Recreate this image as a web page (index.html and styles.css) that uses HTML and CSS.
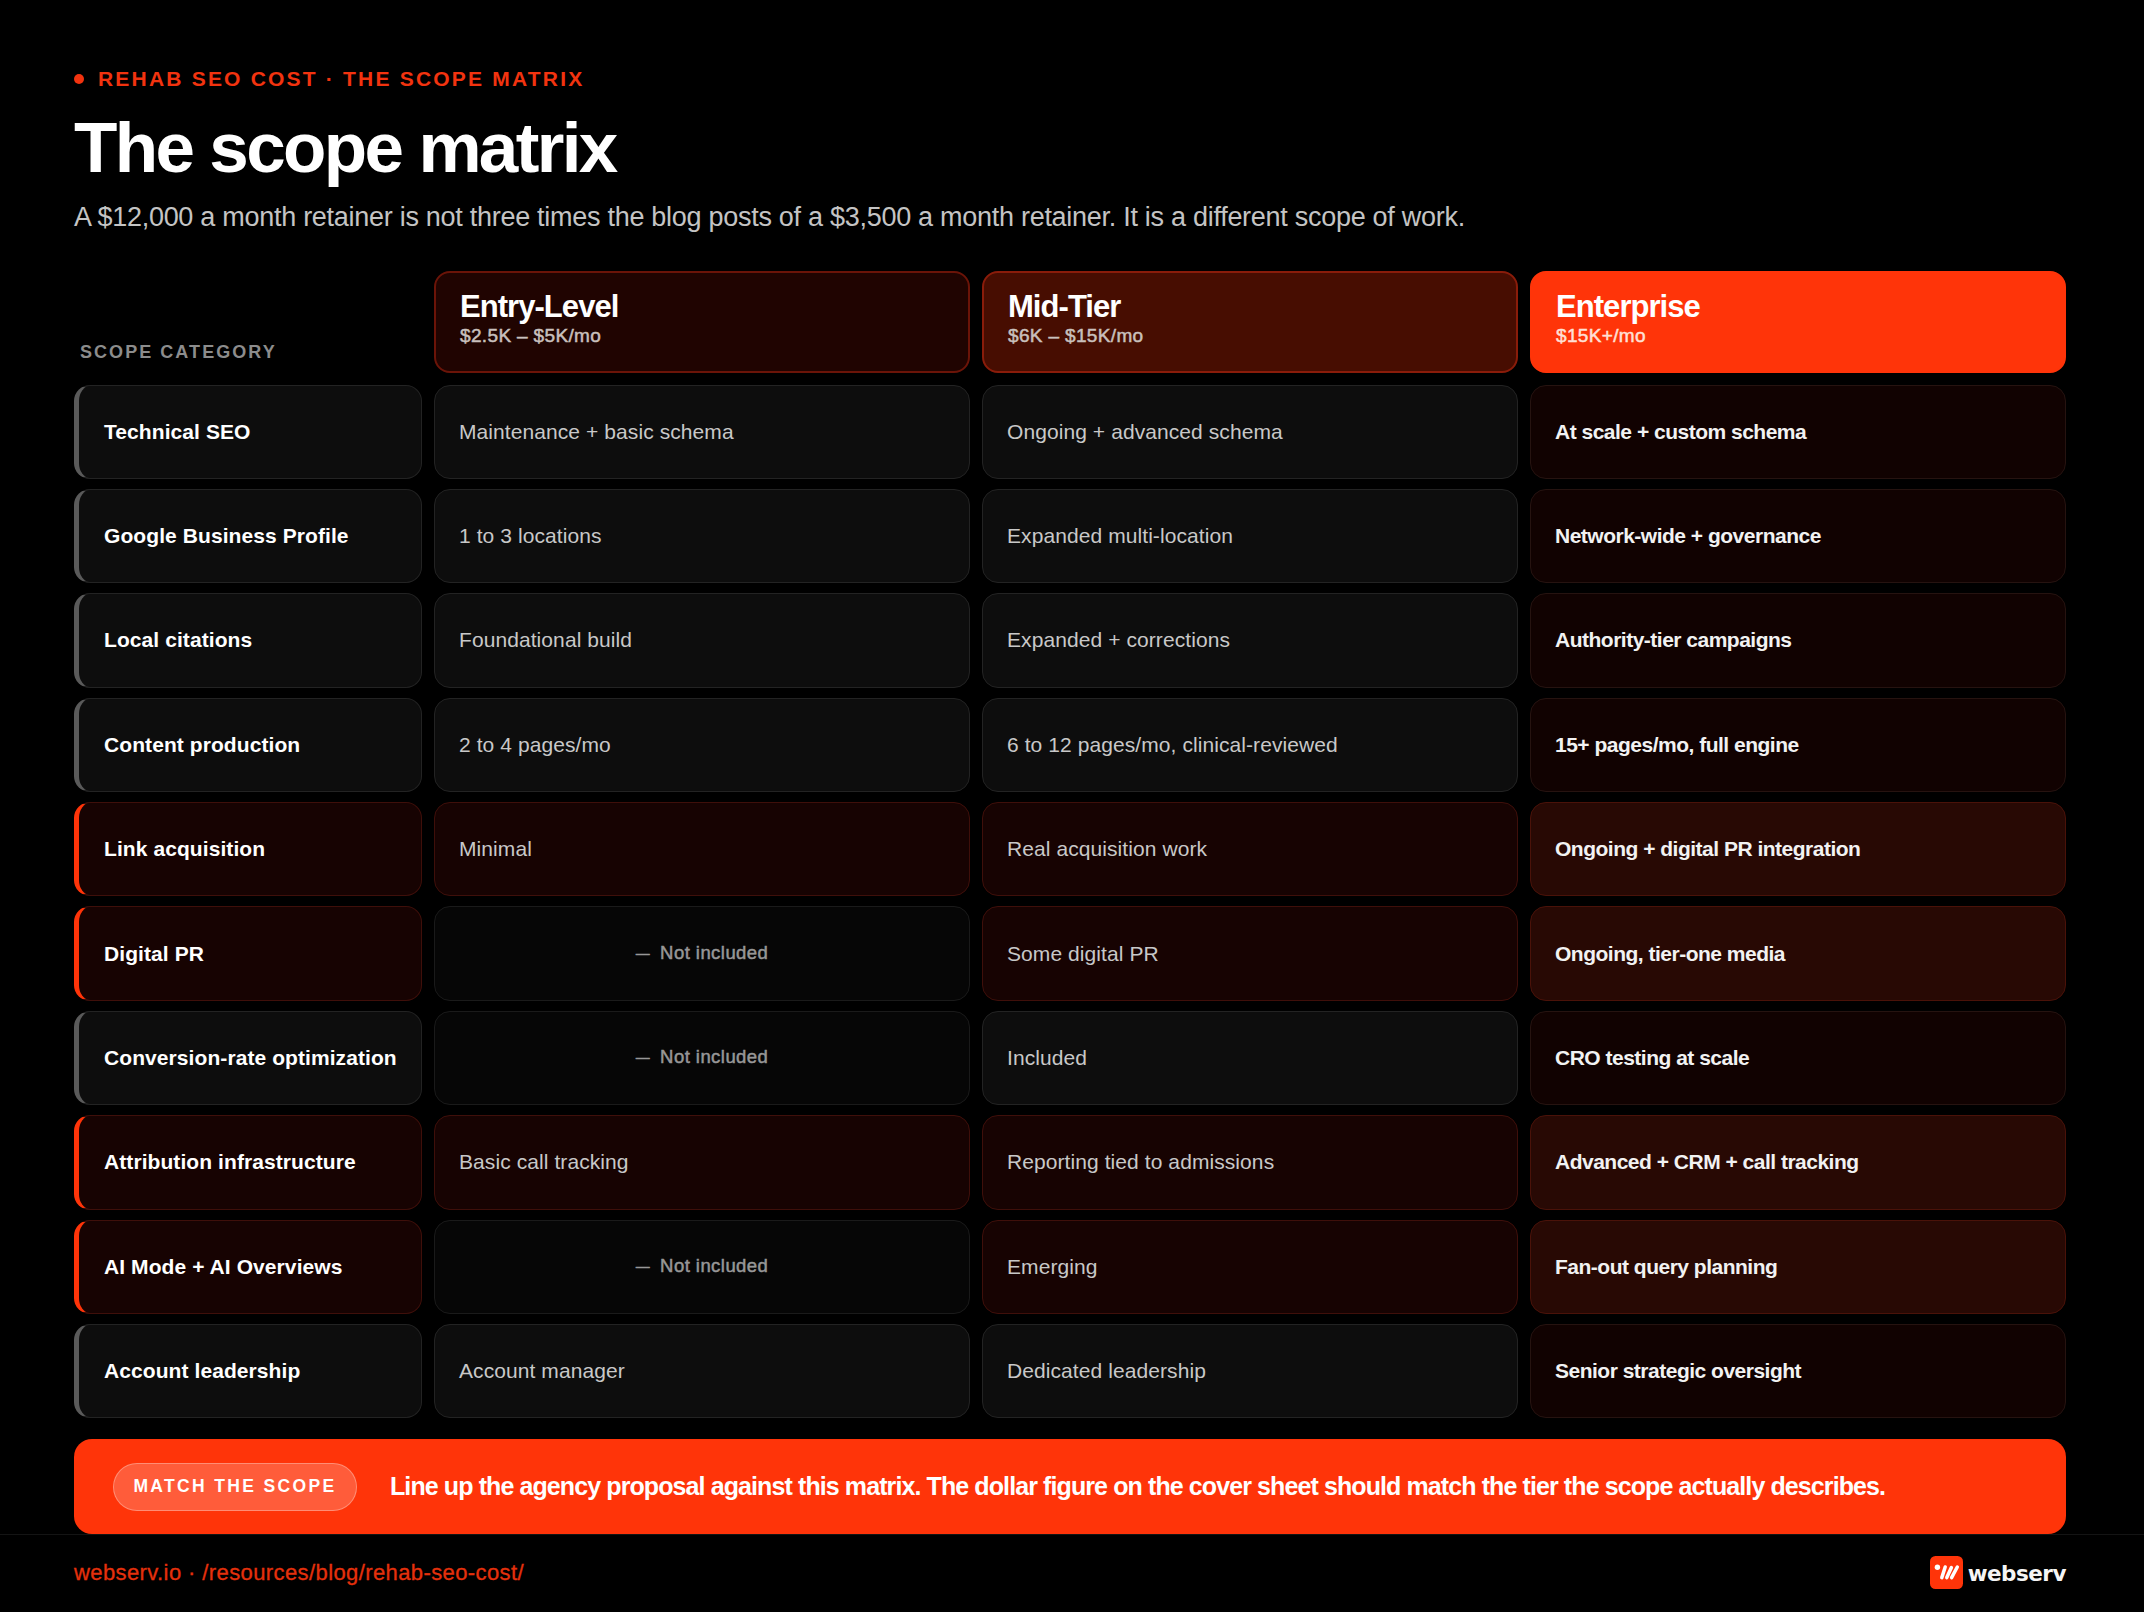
FILE: index.html
```html
<!DOCTYPE html>
<html>
<head>
<meta charset="utf-8">
<title>The scope matrix</title>
<link rel="stylesheet" href="styles.css">
</head>
<body>
<div class="page">
  <div class="eyebrow"><span class="dot"></span>REHAB SEO COST · THE SCOPE MATRIX</div>
  <h1>The scope matrix</h1>
  <p class="lede">A $12,000 a month retainer is not three times the blog posts of a $3,500 a month retainer. It is a different scope of work.</p>

  <div class="matrix">
    <div class="corner">SCOPE CATEGORY</div>
    <div class="tier entry"><b>Entry-Level</b><span>$2.5K – $5K/mo</span></div>
    <div class="tier mid"><b>Mid-Tier</b><span>$6K – $15K/mo</span></div>
    <div class="tier top"><b>Enterprise</b><span>$15K+/mo</span></div>

    <div class="cell cat">Technical SEO</div>
    <div class="cell">Maintenance + basic schema</div>
    <div class="cell">Ongoing + advanced schema</div>
    <div class="cell ent">At scale + custom schema</div>

    <div class="cell cat">Google Business Profile</div>
    <div class="cell">1 to 3 locations</div>
    <div class="cell">Expanded multi-location</div>
    <div class="cell ent">Network-wide + governance</div>

    <div class="cell cat">Local citations</div>
    <div class="cell">Foundational build</div>
    <div class="cell">Expanded + corrections</div>
    <div class="cell ent">Authority-tier campaigns</div>

    <div class="cell cat">Content production</div>
    <div class="cell">2 to 4 pages/mo</div>
    <div class="cell">6 to 12 pages/mo, clinical-reviewed</div>
    <div class="cell ent">15+ pages/mo, full engine</div>

    <div class="cell cat hot">Link acquisition</div>
    <div class="cell hot">Minimal</div>
    <div class="cell hot">Real acquisition work</div>
    <div class="cell ent hot">Ongoing + digital PR integration</div>

    <div class="cell cat hot">Digital PR</div>
    <div class="cell none"><span class="dash">—</span>Not included</div>
    <div class="cell hot">Some digital PR</div>
    <div class="cell ent hot">Ongoing, tier-one media</div>

    <div class="cell cat">Conversion-rate optimization</div>
    <div class="cell none"><span class="dash">—</span>Not included</div>
    <div class="cell">Included</div>
    <div class="cell ent">CRO testing at scale</div>

    <div class="cell cat hot">Attribution infrastructure</div>
    <div class="cell hot">Basic call tracking</div>
    <div class="cell hot">Reporting tied to admissions</div>
    <div class="cell ent hot">Advanced + CRM + call tracking</div>

    <div class="cell cat hot">AI Mode + AI Overviews</div>
    <div class="cell none"><span class="dash">—</span>Not included</div>
    <div class="cell hot">Emerging</div>
    <div class="cell ent hot">Fan-out query planning</div>

    <div class="cell cat">Account leadership</div>
    <div class="cell">Account manager</div>
    <div class="cell">Dedicated leadership</div>
    <div class="cell ent">Senior strategic oversight</div>
  </div>

  <div class="banner">
    <span class="pill">MATCH THE SCOPE</span>
    <span class="banner-text">Line up the agency proposal against this matrix. The dollar figure on the cover sheet should match the tier the scope actually describes.</span>
  </div>
</div>

<footer class="foot">
  <span class="url">webserv.io · /resources/blog/rehab-seo-cost/</span>
  <span class="logo">
    <svg class="mark" viewBox="0 0 33 33" width="33" height="33">
      <rect width="33" height="33" rx="5.5" fill="#ff3409"/>
      <circle cx="7.4" cy="11.2" r="2.7" fill="#fff"/>
      <path d="M15.2 11 L11.8 21.6 M21.4 11.5 L16.8 21.6 M27.3 11 L21.6 21.6" stroke="#fff" stroke-width="3.5" stroke-linecap="round" fill="none"/>
    </svg>
    <span class="word">webserv</span>
  </span>
</footer>
</body>
</html>
```

FILE: styles.css
```css
* { box-sizing: border-box; }

html, body { margin: 0; padding: 0; }

body {
  width: 2144px;
  height: 1612px;
  background: #000;
  color: #fff;
  font-family: "Liberation Sans", Arial, sans-serif;
  overflow: hidden;
}

.page { padding: 68px 78px 0 74px; }

.eyebrow {
  display: flex;
  align-items: center;
  height: 21px;
  font-size: 21px;
  font-weight: 700;
  letter-spacing: 2.2px;
  color: #f2330f;
}

.dot {
  width: 10px;
  height: 10px;
  border-radius: 50%;
  background: #f2330f;
  margin-right: 14px;
}

h1 {
  margin: 21px 0 0;
  font-size: 71px;
  line-height: 76px;
  font-weight: 700;
  letter-spacing: -2.65px;
}

.lede {
  margin: 14px 0 0;
  font-size: 27px;
  line-height: 34px;
  letter-spacing: -0.28px;
  color: #c4c4c4;
}

.matrix {
  display: grid;
  grid-template-columns: 348px repeat(3, 1fr);
  grid-template-rows: 104px repeat(10, 94.4px);
  gap: 10px 12px;
  margin-top: 36.5px;
}

.corner {
  align-self: end;
  padding: 0 0 12px 6px;
  font-size: 18px;
  font-weight: 700;
  letter-spacing: 2.05px;
  color: #8c8c8c;
}

.tier {
  display: flex;
  flex-direction: column;
  height: 102px;
  padding: 16px 24px 0;
  border-radius: 16px;
  border: 2px solid #6b1408;
}
.tier b { font-size: 31px; line-height: 35px; letter-spacing: -0.95px; }
.tier span {
  font-size: 19px;
  line-height: 24px;
  letter-spacing: .35px;
  -webkit-text-stroke: .5px;
  color: #c9c0bd;
}

.entry { background: #200401; }
.mid { background: #470d01; border-color: #8a1c0a; }
.top { background: #ff3409; border-color: #ff3409; }
.top span { color: #ffe0d6; }

.cell {
  display: flex;
  align-items: center;
  padding: 0 24px;
  border: 1.5px solid #232323;
  border-radius: 16px;
  background: #0d0d0d;
  font-size: 21px;
  letter-spacing: .08px;
  color: #c8c8c8;
}

.cat {
  padding: 0 0 0 25px;
  border-left: 5px solid #5a5a5a;
  font-weight: 700;
  letter-spacing: .08px;
  white-space: nowrap;
  color: #fff;
}

.ent {
  background: #110201;
  border-color: #261310;
  font-weight: 700;
  letter-spacing: -0.5px;
  color: #f2f2f2;
}

.hot { background: #170302; border-color: #3f0f0a; }
.ent.hot { background: #280904; border-color: #4a1209; }
.cat.hot { border-left-color: #ff3409; }

.none {
  justify-content: center;
  padding-bottom: 2px;
  background: #060606;
  border-color: #1a1a1a;
  font-size: 18.5px;
  letter-spacing: .45px;
  -webkit-text-stroke: .5px;
  color: #979797;
}

.dash {
  margin-right: 10px;
  font-size: 14px;
  -webkit-text-stroke: .3px;
}

.banner {
  display: flex;
  align-items: center;
  height: 95px;
  margin-top: 21px;
  padding-left: 39px;
  background: #ff3409;
  border-radius: 18px;
}

.pill {
  display: flex;
  align-items: center;
  justify-content: center;
  width: 244px;
  height: 48px;
  border-radius: 24px;
  background: rgba(255, 255, 255, .2);
  border: 1.5px solid rgba(255, 255, 255, .3);
  font-size: 17.5px;
  font-weight: 700;
  letter-spacing: 2.35px;
}

.banner-text {
  margin-left: 33px;
  font-size: 25px;
  font-weight: 700;
  letter-spacing: -0.9px;
}

.foot {
  display: flex;
  align-items: center;
  justify-content: space-between;
  height: 76px;
  padding: 0 78px 0 74px;
  border-top: 1px solid #141414;
}

.url {
  font-size: 22px;
  -webkit-text-stroke: .3px;
  letter-spacing: .4px;
  color: #e5300c;
}

.logo { display: flex; align-items: center; gap: 5px; }
.mark { display: block; }
.word {
  padding-top: 2px;
  font-family: "DejaVu Sans", sans-serif;
  font-size: 21.5px;
  font-weight: 700;
  letter-spacing: -0.5px;
  color: #f5f5f5;
}
```
